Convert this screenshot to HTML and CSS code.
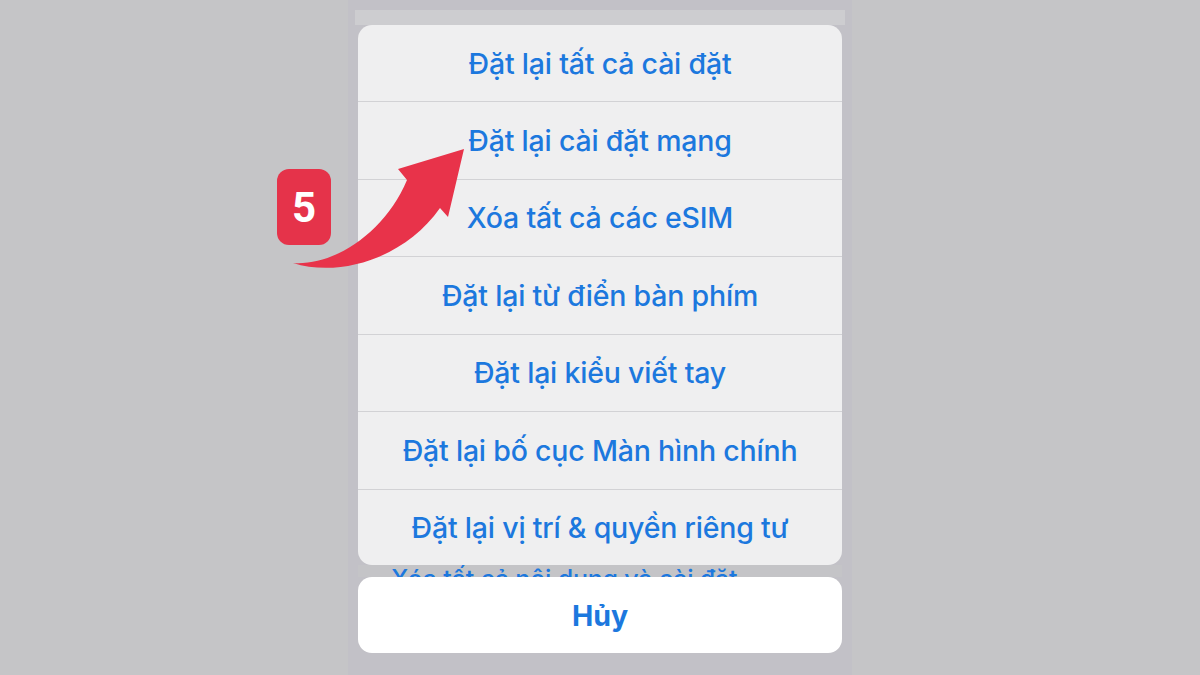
FILE: index.html
```html
<!DOCTYPE html>
<html lang="vi">
<head>
<meta charset="utf-8">
<link rel="stylesheet" href="styles.css">
</head>
<body>
<div class="stage">
  <div class="phone">
    <div class="backstrip"></div>
    <div class="sheet">
      <div class="row">Đặt lại tất cả cài đặt</div>
      <div class="row">Đặt lại cài đặt mạng</div>
      <div class="row">Xóa tất cả các eSIM</div>
      <div class="row">Đặt lại từ điển bàn phím</div>
      <div class="row">Đặt lại kiểu viết tay</div>
      <div class="row">Đặt lại bố cục Màn hình chính</div>
      <div class="row">Đặt lại vị trí &amp; quyền riêng tư</div>
    </div>
    <div class="peek"><span>Xóa tất cả nội dung và cài đặt</span></div>
    <div class="cancel">Hủy</div>
  </div>
  <div class="badge">5</div>
  <svg class="arrow" width="1200" height="675" viewBox="0 0 1200 675">
    <path d="M293 263 C335 266 385 232 407 180 L398 169 L464 149 L448 217 L440 208 C405 258 340 278 293 263 Z" fill="#e8334a"/>
  </svg>
</div>
</body>
</html>
```
FILE: styles.css
```css
html, body {
  margin: 0;
  padding: 0;
}
body {
  width: 1200px;
  height: 675px;
  overflow: hidden;
  background: #c5c5c7;
  font-family: Inter, Roboto, "Noto Sans", sans-serif;
}
.stage {
  position: relative;
  width: 1200px;
  height: 675px;
  display: flex;
  justify-content: center;
}
.phone {
  width: 504px;
  height: 675px;
  background: #c2c1c7;
  display: flex;
  flex-direction: column;
  align-items: center;
  position: relative;
}
.backstrip {
  width: 490px;
  height: 15px;
  margin-top: 10px;
  background: #cdcdd0;
}
.sheet {
  width: 484px;
  height: 540px;
  background: #efeff0;
  border-radius: 14px;
  overflow: hidden;
  display: flex;
  flex-direction: column;
}
.row {
  height: 77.5px;
  flex: none;
  display: flex;
  align-items: center;
  justify-content: center;
  color: #1c78de;
  font-size: 28.5px;
  font-weight: 500;
  letter-spacing: -0.2px;
  border-top: 1px solid #d2d2d5;
  box-sizing: border-box;
}
.row:first-child {
  border-top: none;
  height: 76px;
}
.row:last-child {
  height: 76.5px;
}
.peek {
  width: 484px;
  height: 12px;
  overflow: hidden;
  position: relative;
  background: #c4c4c7;
}
.peek span {
  position: absolute;
  left: 33px;
  top: 2px;
  color: #1c78de;
  font-size: 25px;
  font-weight: 500;
  letter-spacing: -0.2px;
  line-height: 25px;
  white-space: nowrap;
}
.cancel {
  width: 484px;
  height: 76px;
  background: #ffffff;
  border-radius: 14px;
  display: flex;
  align-items: center;
  justify-content: center;
  color: #1c78de;
  font-size: 28.5px;
  font-weight: 700;
}
.badge {
  position: absolute;
  left: 277px;
  top: 169px;
  width: 54px;
  height: 76px;
  border-radius: 12px;
  background: #e5334a;
  color: #ffffff;
  font-family: Roboto, "Noto Sans", sans-serif;
  font-size: 42px;
  font-weight: 700;
  display: flex;
  align-items: center;
  justify-content: center;
}
.arrow {
  position: absolute;
  left: 0;
  top: 0;
  pointer-events: none;
}
```
